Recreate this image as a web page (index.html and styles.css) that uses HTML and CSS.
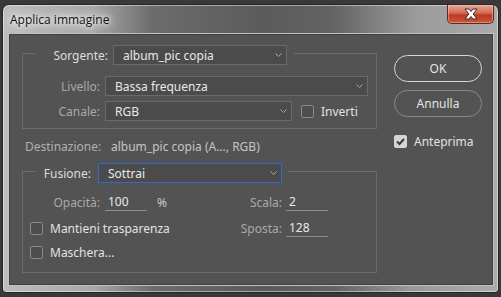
FILE: index.html
```html
<!DOCTYPE html>
<html lang="it">
<head>
    <meta charset="UTF-8">
    <title>Applica immagine</title>
    <link rel="stylesheet" href="styles.css">
</head>
<body>
    <div class="window">
        <!-- barra del titolo -->
        <div class="titlebar">
            <span class="title">Applica immagine</span>
            <button class="close">
                <svg width="16" height="12" viewBox="0 0 16 12">
                    <path d="M2 1 H6 L8 3.5 L10 1 H14 L10.2 6 L14 11 H10 L8 8.5 L6 11 H2 L5.8 6 Z" fill="#fff" stroke="#3a2a2a" stroke-width="1" stroke-linejoin="round"/>
                </svg>
            </button>
        </div>

        <div class="dialog">
            <div class="main">
                <!-- sorgente -->
                <fieldset class="group source">
                    <legend class="group-head">
                        <span class="head-label">Sorgente:</span>
                        <div class="select w-source">
                            <span>album_pic copia</span>
                            <svg class="chev" width="7" height="4" viewBox="0 0 7 4"><path d="M0.5 0.5 L3.5 3.5 L6.5 0.5" fill="none" stroke="#a8a8a8" stroke-width="1"/></svg>
                        </div>
                    </legend>
                    <div class="row row-layer">
                        <label class="field-label">Livello:</label>
                        <div class="select w-layer">
                            <span>Bassa frequenza</span>
                            <svg class="chev" width="7" height="4" viewBox="0 0 7 4"><path d="M0.5 0.5 L3.5 3.5 L6.5 0.5" fill="none" stroke="#a8a8a8" stroke-width="1"/></svg>
                        </div>
                    </div>
                    <div class="row row-channel">
                        <label class="field-label">Canale:</label>
                        <div class="select w-channel">
                            <span>RGB</span>
                            <svg class="chev" width="7" height="4" viewBox="0 0 7 4"><path d="M0.5 0.5 L3.5 3.5 L6.5 0.5" fill="none" stroke="#a8a8a8" stroke-width="1"/></svg>
                        </div>
                        <span class="check invert"></span>
                        <span class="check-text">Inverti</span>
                    </div>
                </fieldset>

                <div class="dest">
                    <span class="dest-label">Destinazione:</span>
                    <span class="dest-value">album_pic copia (A..., RGB)</span>
                </div>

                <!-- fusione -->
                <fieldset class="group blend">
                    <legend class="group-head">
                        <span class="head-label">Fusione:</span>
                        <div class="select w-blend focused">
                            <span>Sottrai</span>
                            <svg class="chev" width="7" height="4" viewBox="0 0 7 4"><path d="M0.5 0.5 L3.5 3.5 L6.5 0.5" fill="none" stroke="#a8a8a8" stroke-width="1"/></svg>
                        </div>
                    </legend>
                    <div class="row row-opacity">
                        <label class="field-label">Opacità:</label>
                        <span class="num">100</span>
                        <span class="unit">%</span>
                        <div class="pair">
                            <label class="pair-label">Scala:</label>
                            <span class="num">2</span>
                        </div>
                    </div>
                    <div class="row row-keep">
                        <span class="check"></span>
                        <span class="check-text">Mantieni trasparenza</span>
                        <div class="pair">
                            <label class="pair-label">Sposta:</label>
                            <span class="num">128</span>
                        </div>
                    </div>
                    <div class="row row-mask">
                        <span class="check"></span>
                        <span class="check-text">Maschera...</span>
                    </div>
                </fieldset>
            </div>

            <div class="side">
                <button class="btn btn-default">OK</button>
                <button class="btn btn-cancel">Annulla</button>
                <div class="preview">
                    <span class="check checked">
                        <svg width="11" height="11" viewBox="0 0 11 11"><path d="M2 5.5 L4.5 8 L9 3" fill="none" stroke="#3a3a3a" stroke-width="2"/></svg>
                    </span>
                    <span class="check-text">Anteprima</span>
                </div>
            </div>
        </div>
    </div>
</body>
</html>
```

FILE: styles.css
```css
body {
    margin: 0;
    width: 501px;
    height: 297px;
    overflow: hidden;
    background-color: #393939;
    font-family: "Noto Sans", "Segoe UI", sans-serif;
    font-size: 12px;
}

.window {
    box-sizing: border-box;
    width: 497px;
    height: 289px;
    margin: 4px 0 0 2px;
    padding: 0 4px 0 5px;
    border: 1px solid #262626;
    border-radius: 7px 7px 4px 4px;
    background: linear-gradient(90deg, #bdbdbd 0, #a8a8a8 90px, #6c6c6c 150px, #5b5b5b 260px, #636363 330px, #9a9a9a 410px, #ababab 100%);
    box-shadow: inset 0 0 0 1px rgba(255, 255, 255, 0.45);
}

.titlebar {
    height: 28px;
    display: flex;
    justify-content: space-between;
    align-items: flex-start;
}

.title {
    margin: 7px 0 0 2px;
    line-height: 16px;
    color: #111;
    font-family: "Open Sans", "Noto Sans", sans-serif;
    text-shadow: 0 0 8px #fff, 0 0 12px #fff, 0 0 4px rgba(255, 255, 255, 0.8);
}

.close {
    width: 47px;
    height: 19px;
    padding: 0;
    border: 1px solid #5a2a22;
    border-top: none;
    border-radius: 0 0 5px 5px;
    background: linear-gradient(180deg, #e6a796 0, #d36a55 45%, #bd3a22 55%, #c9553b 100%);
    box-shadow: inset 0 0 0 1px rgba(255, 210, 200, 0.45);
    display: flex;
    align-items: center;
    justify-content: center;
}

.dialog {
    box-sizing: border-box;
    height: 253px;
    display: flex;
    border: 1px solid #c2c2c2;
    background-color: #535353;
    box-shadow: inset 0 0 0 1px #3f3f3f;
}

.main {
    width: 355px;
    padding: 7px 0 0 13px;
}

.group {
    box-sizing: border-box;
    width: 355px;
    min-width: 0;
    margin: 0;
    padding: 0;
    border: 1px solid #6b6b6b;
}

.group-head {
    display: flex;
    align-items: center;
    margin-left: 12px;
    padding: 4px 7px 0 0;
}

.head-label {
    text-align: right;
    color: #dcdcdc;
}

.source .head-label {
    width: 73px;
    margin-right: 5px;
}

.blend .group-head {
    padding-right: 6px;
}

.blend .head-label {
    width: 56px;
    margin-right: 7px;
}

.select {
    box-sizing: border-box;
    height: 20px;
    display: flex;
    align-items: center;
    justify-content: space-between;
    padding: 0 4px 0 9px;
    border: 1px solid #6a6a6a;
    background-color: #4b4b4b;
    color: #e8e8e8;
}

.select.focused {
    border-color: #2f6bd0;
}

.w-source { width: 174px; }
.w-layer { width: 263px; }
.w-channel { width: 187px; }
.w-blend { width: 184px; }

.row {
    display: flex;
    align-items: center;
}

.field-label {
    width: 77px;
    margin-right: 5px;
    text-align: right;
    color: #a9a9a9;
}

.row-layer {
    margin-top: 11px;
}

.row-channel {
    margin-top: 5px;
}

.source {
    padding-bottom: 7px;
}

.check {
    box-sizing: border-box;
    width: 13px;
    height: 13px;
    flex: none;
    display: flex;
    align-items: center;
    justify-content: center;
    border: 1px solid #8a8a8a;
    border-radius: 2px;
    background-color: #4e4e4e;
}

.check.checked {
    border-color: #d4d4d4;
    background-color: #d4d4d4;
}

.check-text {
    margin-left: 7px;
    color: #e2e2e2;
}

.invert {
    margin-left: 9px;
}

.dest {
    display: flex;
    height: 16px;
    line-height: 16px;
    margin: 10px 0 0 3px;
    color: #b0b0b0;
}

.dest-label {
    width: 86px;
}

.dest-value {
    color: #c4c4c4;
}

.blend {
    margin-top: 4px;
    padding-bottom: 11px;
}

.blend .row {
    height: 18px;
    padding-right: 48px;
}

.row-opacity {
    margin-top: 10px;
}

.row-keep {
    margin-top: 8px;
}

.row-mask {
    margin-top: 6px;
}

.row-keep .check,
.row-mask .check {
    margin-left: 7px;
}

.num {
    box-sizing: border-box;
    width: 42px;
    height: 18px;
    line-height: 17px;
    padding-left: 3px;
    border-bottom: 1px solid #8c8c8c;
    color: #e8e8e8;
}

.unit {
    margin-left: 10px;
    color: #c8c8c8;
}

.pair {
    display: flex;
    align-items: center;
    margin-left: auto;
}

.pair-label {
    width: 52px;
    margin-right: 4px;
    text-align: right;
    color: #a9a9a9;
}

.side {
    display: flex;
    flex-direction: column;
    width: 88px;
    margin-left: 17px;
    padding-top: 21px;
}

.btn {
    box-sizing: border-box;
    width: 88px;
    height: 27px;
    padding: 0;
    border: 1px solid #8a8a8a;
    border-radius: 14px;
    background: transparent;
    color: #e4e4e4;
    font-family: inherit;
    font-size: 12px;
}

.btn-default {
    border-color: #d8d8d8;
}

.btn-cancel {
    margin-top: 8px;
}

.preview {
    display: flex;
    align-items: center;
    margin-top: 16px;
}
```
